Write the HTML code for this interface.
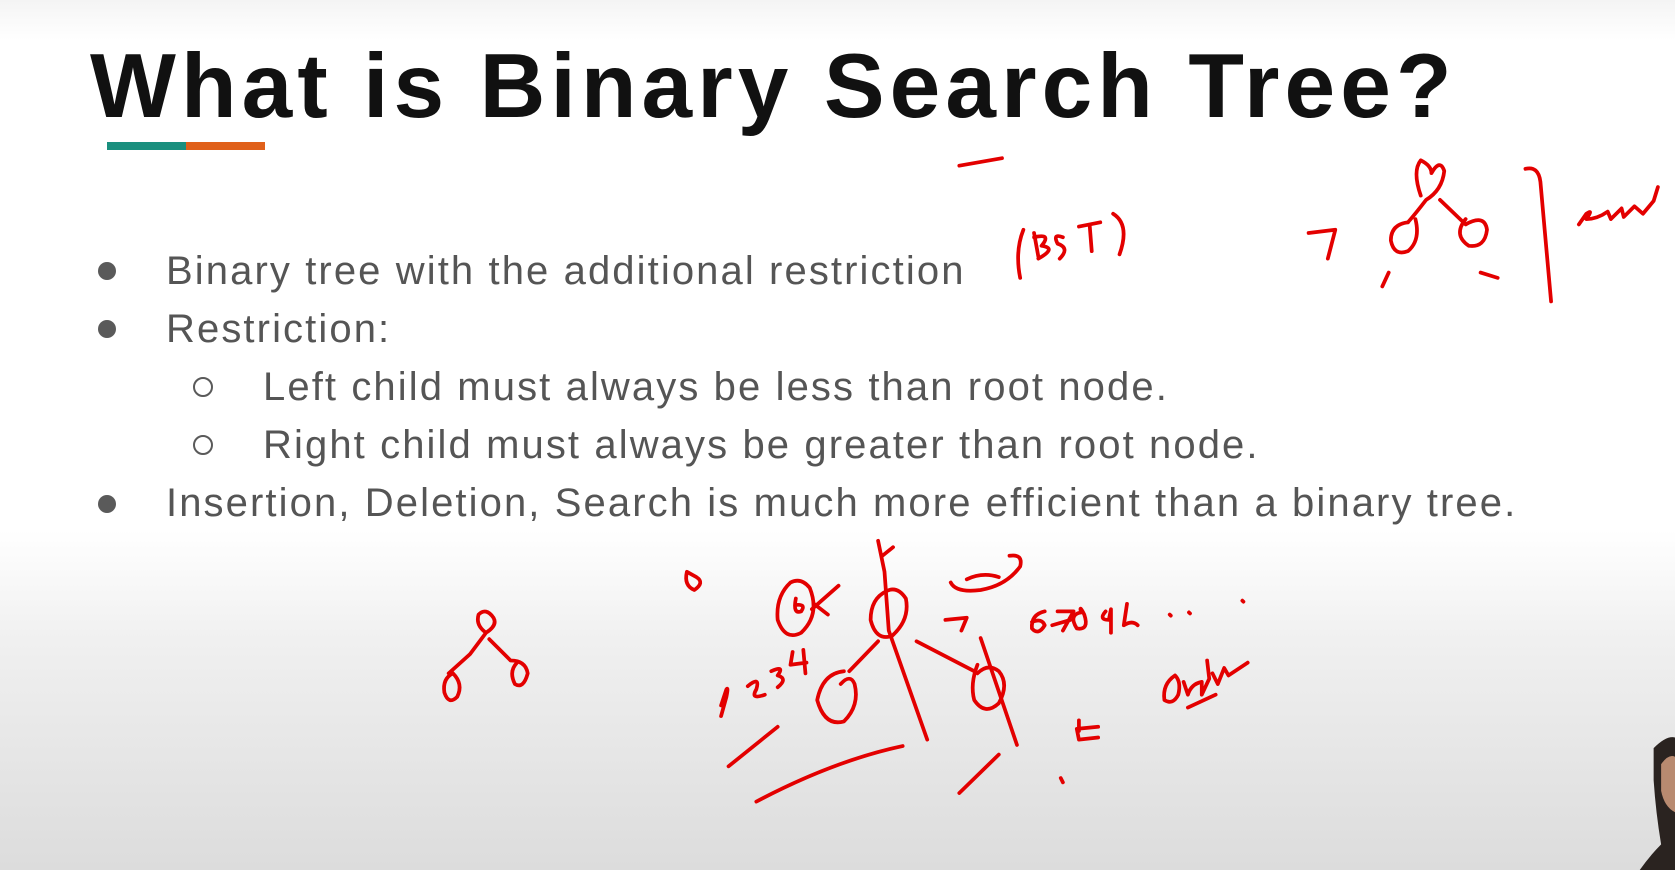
<!DOCTYPE html>
<html><head><meta charset="utf-8"><style>
html,body{margin:0;padding:0}
body{width:1675px;height:870px;overflow:hidden;position:relative;
background:linear-gradient(180deg,#f4f4f4 0px,#ffffff 40px,#ffffff 530px,#f0f0f0 640px,#e2e2e2 800px,#dcdcdc 870px);
font-family:"Liberation Sans",sans-serif}
h1{position:absolute;left:90px;top:32px;margin:0;font-size:91px;font-weight:bold;color:#111;letter-spacing:5.1px;white-space:nowrap;line-height:110px}
.bar1{position:absolute;left:107px;top:142px;width:79px;height:8px;background:#1a8f7e}
.bar2{position:absolute;left:186px;top:142px;width:79px;height:8px;background:#e0601a}
.t{position:absolute;font-size:40px;color:#555;white-space:nowrap;line-height:46px;letter-spacing:2.1px}
.dot{position:absolute;width:18px;height:18px;border-radius:50%;background:#5a5a5a}
.ring{position:absolute;border-radius:50%;border:2.5px solid #5a5a5a;box-sizing:border-box;width:20px;height:20px}
svg{position:absolute;left:0;top:0}
</style></head><body>
<h1>What is Binary Search Tree?</h1>
<div class="bar1"></div><div class="bar2"></div>

<div class="dot" style="left:98px;top:262px"></div>
<div class="t" style="left:166px;top:248px">Binary tree with the additional restriction</div>
<div class="dot" style="left:98px;top:320px"></div>
<div class="t" style="left:166px;top:306px">Restriction:</div>
<div class="ring" style="left:193px;top:377px"></div>
<div class="t" style="left:263px;top:364px">Left child must always be less than root node.</div>
<div class="ring" style="left:193px;top:435px"></div>
<div class="t" style="left:263px;top:422px">Right child must always be greater than root node.</div>
<div class="dot" style="left:98px;top:495px"></div>
<div class="t" style="left:166px;top:480px">Insertion, Deletion, Search is much more efficient than a binary tree.</div>

<svg width="1675" height="870" viewBox="0 0 1568 814" preserveAspectRatio="none" fill="none" stroke="#e30000" stroke-width="3.5" stroke-linecap="round" stroke-linejoin="round">
<path d="M898 155 L938 148"/>
<path d="M958 215 Q950 235 955 260"/><path d="M968 218 L972 240 M968 222 Q985 218 975 230 Q990 232 972 242"/>
<path d="M995 222 Q985 218 990 228 Q1002 232 992 242"/><path d="M1010 212 L1030 208 M1020 210 L1022 235"/><path d="M1042 200 Q1058 210 1048 238"/>
<path d="M1225 218 L1250 215 L1243 242"/>
<path d="M1330 183 Q1322 160 1330 150 Q1340 155 1340 162 Q1348 148 1352 160 Q1350 178 1335 187 Q1325 200 1318 208"/>
<path d="M1318 208 Q1302 210 1302 225 Q1305 240 1318 235 Q1330 225 1325 205"/>
<path d="M1348 187 L1372 210 Q1390 200 1392 215 Q1390 232 1375 230 Q1360 220 1372 205"/>
<path d="M1300 255 L1294 268"/><path d="M1386 255 L1402 260"/>
<path d="M1428 158 Q1440 155 1442 170 L1446 215 L1452 282"/>
<path d="M1478 210 L1485 200 Q1492 195 1485 205 Q1495 205 1505 198 L1508 205 L1518 195 L1520 203 L1530 193 L1538 200 L1548 188 L1552 175"/>
<path d="M455 592 Q445 585 448 575 Q455 568 462 578 Q466 585 455 592 L440 612 L420 630"/>
<path d="M424 630 Q414 635 416 648 Q420 660 428 652 Q434 640 424 630"/>
<path d="M458 598 L478 618 Q492 618 494 630 Q490 645 482 640 Q476 628 484 620"/>
<path d="M643 535 Q640 548 650 552 Q660 545 652 540 Z"/>
<path d="M740 545 Q726 558 728 580 Q735 600 750 592 Q768 575 758 550 Q750 540 740 545"/>
<path d="M745 560 Q742 575 750 572 Q755 565 745 566"/><path d="M760 570 L785 548 M762 565 L775 575"/>
<path d="M822 506 L828 535 L832 590 L868 692"/><path d="M826 520 L836 512"/>
<path d="M830 553 Q815 560 815 580 Q820 600 835 595 Q852 580 848 560 Q840 548 830 553"/>
<path d="M822 600 L795 628"/>
<path d="M790 628 Q770 630 765 655 Q772 680 790 675 Q805 660 800 640 Q796 630 787 640"/>
<path d="M858 600 L912 628"/>
<path d="M915 622 Q908 640 912 655 Q922 670 935 658 Q945 640 935 628 Q925 620 915 630"/>
<path d="M918 597 L952 697"/>
<path d="M890 545 Q895 555 918 552 Q942 548 955 530 Q958 518 945 520"/><path d="M905 542 Q920 535 935 540"/>
<path d="M885 580 L905 578 L900 590"/>
<path d="M978 572 Q965 575 966 588 Q972 595 978 585 Q975 578 966 582"/>
<path d="M990 572 L1005 572 L995 590 M985 585 L1002 580"/>
<path d="M1012 573 Q1000 575 1008 588 Q1020 590 1015 575 Q1010 565 1012 573"/>
<path d="M1035 572 Q1028 580 1038 580 L1040 570 L1040 592"/><path d="M1055 565 L1052 585 Q1060 580 1065 585"/>
<path d="M1095 575 L1096 576 M1113 573 L1114 574 M1163 562 L1164 563"/>
<path d="M1100 632 Q1088 640 1090 655 Q1098 660 1103 650 Q1106 638 1100 632"/><path d="M1108 638 L1112 650 Q1115 640 1125 638 L1125 650 L1132 635 L1130 618 M1135 630 L1140 640 L1146 625 L1150 632 L1168 620"/>
<path d="M1112 662 L1138 650"/>
<path d="M1028 680 L1008 682 L1010 692 L1028 690 M1010 684 L1010 674"/>
<path d="M993 728 L995 732"/>
<path d="M675 660 L680 645 Q682 642 680 652 L675 670"/>
<path d="M700 642 Q712 632 708 645 Q702 655 716 650"/><path d="M722 628 Q735 622 728 632 Q738 635 728 643"/><path d="M742 610 L740 622 L755 620 M752 608 L754 630"/>
<path d="M682 717 L728 680"/><path d="M708 750 Q780 712 845 698"/><path d="M898 742 L935 706"/>
<path d="M1548 700 Q1560 688 1568 690 L1568 814 L1535 814 Q1545 800 1555 790 Q1550 760 1548 730 Z" fill="#2a2320" stroke="none"/>
<path d="M1555 715 Q1562 705 1568 708 L1568 760 Q1558 755 1555 740 Z" fill="#b88a70" stroke="none"/>
</svg>
</body></html>
